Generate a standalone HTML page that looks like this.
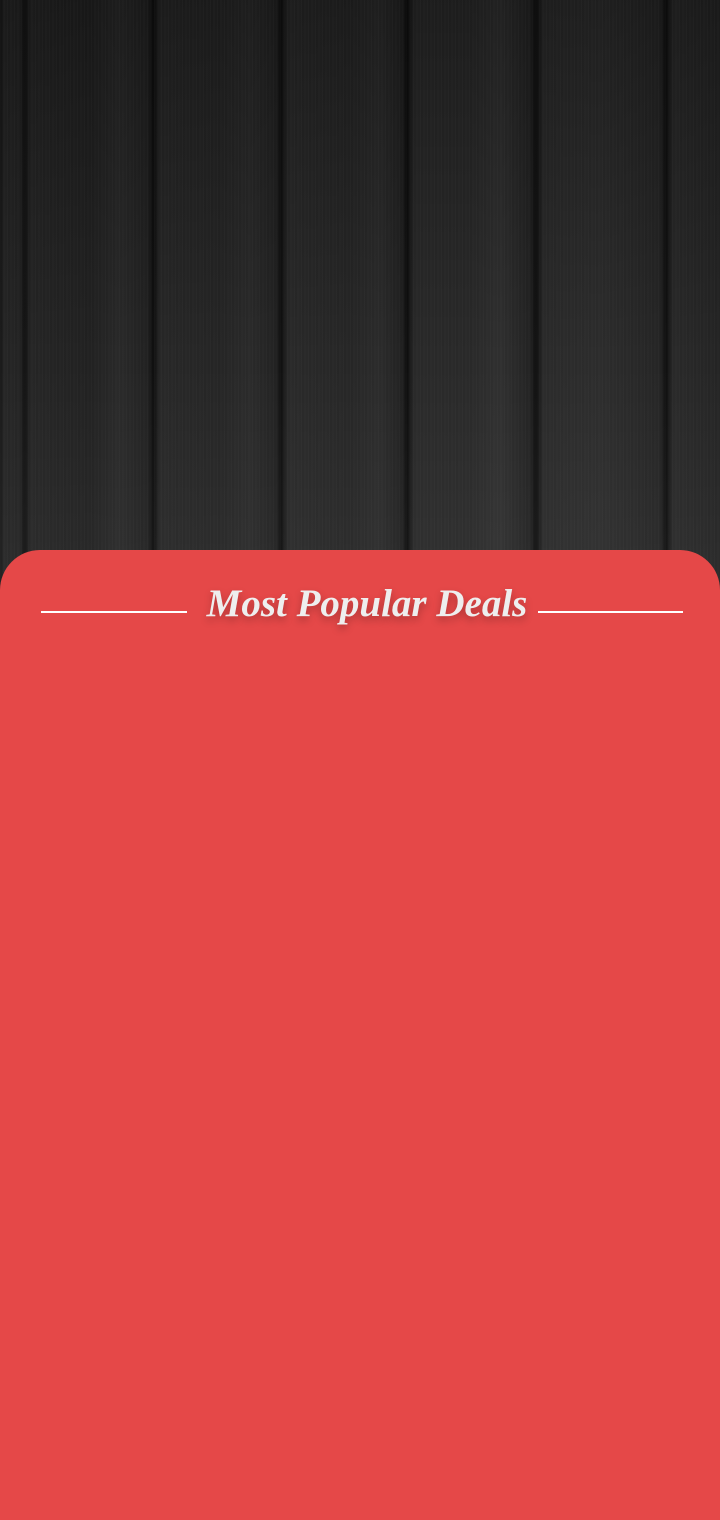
<!DOCTYPE html>
<html><head><meta charset="utf-8"><style>
html,body{margin:0;padding:0;width:720px;height:1520px;overflow:hidden;background:#1e1e1e;}
.wood{position:absolute;left:0;top:0;width:720px;height:600px;
background:
linear-gradient(to bottom,rgba(0,0,0,.3),rgba(0,0,0,0) 60%,rgba(255,255,255,.04)),
linear-gradient(to right,
#161616 0,#262626 4px,#242424 20px,#111 25px,#262626 30px,#222 90px,#2a2a2a 120px,#222 148px,#0e0e0e 153px,#282828 160px,#262626 220px,#2b2b2b 250px,#232323 276px,#0f0f0f 281px,#2a2a2a 288px,#272727 350px,#2c2c2c 380px,#222 402px,#0d0d0d 407px,#2a2a2a 414px,#2a2a2a 470px,#303030 500px,#242424 530px,#0f0f0f 536px,#2b2b2b 543px,#2d2d2d 600px,#262626 660px,#0f0f0f 666px,#2a2a2a 673px,#252525 720px);}
.grain{position:absolute;left:0;top:0;width:720px;height:600px;opacity:.35;
background:repeating-linear-gradient(to right,rgba(255,255,255,.05) 0 1px,rgba(0,0,0,.08) 1px 3px,rgba(255,255,255,.03) 3px 5px,rgba(0,0,0,0) 5px 7px);}
.panel{position:absolute;left:0;top:550px;width:720px;height:970px;background:#e54848;border-radius:40px 40px 0 0;}
.line{position:absolute;top:61px;height:2px;background:#fff;}
.title{position:absolute;left:0;width:734px;top:31px;text-align:center;font-family:"Liberation Serif",serif;font-style:italic;font-weight:bold;font-size:39px;color:#eee;text-shadow:0 4px 8px rgba(0,0,0,.25);}
</style></head><body>
<div class="wood"></div><div class="grain"></div>
<div class="panel">
<div class="line" style="left:41px;width:146px"></div>
<div class="line" style="left:538px;width:145px"></div>
<div class="title">Most Popular Deals</div>
</div>
</body></html>
